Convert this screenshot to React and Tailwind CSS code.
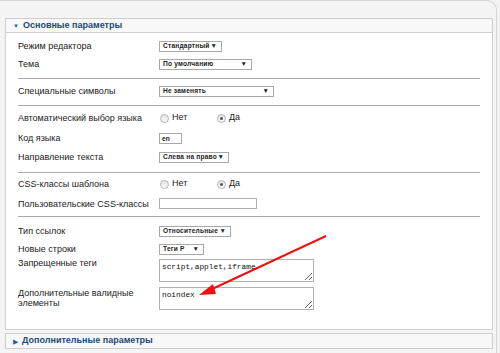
import React from "react";

const Select = ({ value, width }) => (
  <div
    className={`flex items-center justify-between h-[11px] border border-[#a8a8a8] bg-white pl-[3px] pr-[4px] text-[6.6px] font-bold text-[#222] leading-none whitespace-nowrap ${width}`}
  >
    <span className="tracking-[0.2px]">{value}</span>
    <span className="text-[6.5px]">▼</span>
  </div>
);

const Radio = ({ checked }) => (
  <span className="inline-flex items-center justify-center w-[9px] h-[9px] rounded-full border border-[#b5b5b5] bg-gradient-to-b from-[#e4e4e4] to-[#fafafa]">
    {checked && <span className="w-[3px] h-[3px] rounded-full bg-[#555]" />}
  </span>
);

const RadioPair = ({ yes }) => (
  <div className="flex items-center text-[9px] text-[#222]">
    <div className="flex items-center gap-[3px] w-[58px] pl-[1px]">
      <Radio checked={!yes} />
      <span>Нет</span>
    </div>
    <div className="flex items-center gap-[3px]">
      <Radio checked={yes} />
      <span>Да</span>
    </div>
  </div>
);

const Row = ({ label, h = "h-[18px]", children, top }) => (
  <div className={`flex ${top ? "items-start" : "items-center"} ${h}`}>
    <div className="w-[141px] text-[9px] leading-[10px] text-[#222]">{label}</div>
    <div>{children}</div>
  </div>
);

const Divider = ({ cls }) => <div className={`h-px bg-[#a9a9a9] w-[462px] ${cls}`} />;

const Area = ({ value }) => (
  <textarea
    readOnly
    defaultValue={value}
    className="block w-[155px] h-[23px] border border-[#b0b0b0] bg-white px-[2px] py-[2px] text-[7.8px] leading-[10px] text-[#111] font-['Liberation_Mono',monospace] resize outline-none"
  />
);

export default function App() {
  return (
    <div className="relative w-[500px] h-[353px] overflow-hidden bg-[#f2f2f2] font-['Liberation_Sans',Arial,sans-serif]">
      <div className="w-[497px] h-[360px] border-t border-r border-[#d6d6d6] rounded-tr-[10px] bg-[#f4f4f4] pt-[17px] pl-[5px]">
        {/* Основные параметры */}
        <div className="w-[488px] h-[15px] border border-[#cfcfcf] bg-[#f8f8f8] flex items-center pl-[7px] gap-[4px]">
          <span className="text-[6px] text-[#1c6aa8] leading-none">▼</span>
          <span className="text-[9px] font-bold text-[#1a4a78]">Основные параметры</span>
        </div>
        <div className="w-[488px] h-[297px] border border-t-0 border-[#cfcfcf] bg-white pl-[12px] pt-[4px]">
          <Row label="Режим редактора">
            <Select value="Стандартный" width="w-[63px]" />
          </Row>
          <Row label="Тема">
            <Select value="По умолчанию" width="w-[93px]" />
          </Row>
          <Divider cls="mt-[5px] mb-[3px]" />
          <Row label="Специальные символы">
            <Select value="Не заменять" width="w-[115px]" />
          </Row>
          <Divider cls="mt-[5px] mb-[2px]" />
          <Row label="Автоматический выбор языка" h="h-[20px]">
            <RadioPair yes />
          </Row>
          <Row label="Код языка" h="h-[20px]">
            <div className="w-[23px] h-[11px] border border-[#a8a8a8] bg-white pl-[2px] text-[6.6px] font-bold leading-[9px] text-[#222]">en</div>
          </Row>
          <Row label="Направление текста">
            <Select value="Слева на право" width="w-[70px]" />
          </Row>
          <Divider cls="mt-[6px] mb-[2px]" />
          <Row label="CSS-классы шаблона">
            <RadioPair yes />
          </Row>
          <Row label="Пользовательские CSS-классы" h="h-[21px]">
            <div className="w-[98px] h-[11px] border border-[#b0b0b0] bg-white" />
          </Row>
          <Divider cls="mt-[2px] mb-[5px]" />
          <Row label="Тип ссылок">
            <Select value="Относительные" width="w-[72px]" />
          </Row>
          <Row label="Новые строки">
            <Select value="Теги P" width="w-[45px]" />
          </Row>
          <Row label="Запрещенные теги" h="h-[30px]" top>
            <div className="pt-[1px]">
              <Area value="script,applet,iframe" />
            </div>
          </Row>
          <Row label={<>Дополнительные валидные<br />элементы</>} h="h-[26px]" top>
            <div className="-mt-[1px]">
              <Area value="noindex" />
            </div>
          </Row>
        </div>
        {/* Дополнительные параметры */}
        <div className="mt-[3px] w-[488px] h-[16px] border border-[#cfcfcf] bg-[#f8f8f8] flex items-center pl-[7px] gap-[4px]">
          <span className="text-[7px] text-[#1c6aa8] leading-none">▶</span>
          <span className="text-[9px] font-bold text-[#1a4a78]">Дополнительные параметры</span>
        </div>
      </div>
      <svg className="absolute left-0 top-0 pointer-events-none" width="500" height="353">
        <line x1="326" y1="236" x2="210" y2="290" stroke="#ee1111" strokeWidth="2" />
        <polygon points="199,295 213,284 216,294" fill="#ee1111" />
      </svg>
    </div>
  );
}
